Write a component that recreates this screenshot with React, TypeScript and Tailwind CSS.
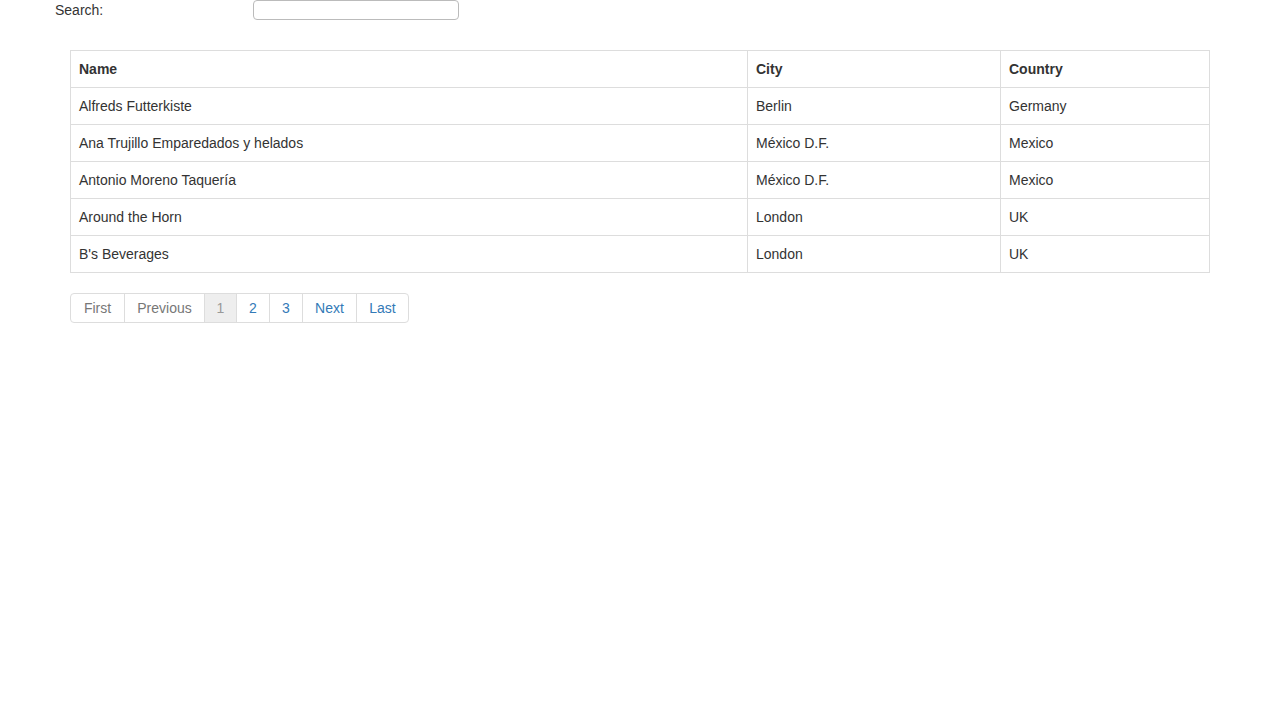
const rows = [
  ["Alfreds Futterkiste", "Berlin", "Germany"],
  ["Ana Trujillo Emparedados y helados", "México D.F.", "Mexico"],
  ["Antonio Moreno Taquería", "México D.F.", "Mexico"],
  ["Around the Horn", "London", "UK"],
  ["B's Beverages", "London", "UK"],
];
export default function App() {
  const pages = [
    { t: "First", c: "text-[#777] w-[53px]" },
    { t: "Previous", c: "text-[#777] w-[80px]" },
    { t: "1", c: "text-[#999] bg-[#eee] w-[32px]" },
    { t: "2", c: "text-[#337ab7] w-[33px]" },
    { t: "3", c: "text-[#337ab7] w-[33px]" },
    { t: "Next", c: "text-[#337ab7] w-[54px]" },
    { t: "Last", c: "text-[#337ab7] w-[52px]" },
  ];
  return (
    <div className="min-h-[720px] bg-white text-[14px] text-[#333]" style={{ fontFamily: '"Liberation Sans", Arial, sans-serif' }}>
      <div className="flex items-center h-[20px]">
        <label className="pl-[55px] w-[253px]">Search:</label>
        <input className="w-[206px] h-[20px] border border-[#bbb] rounded-[4px]" />
      </div>
      <div className="mx-[70px] mt-[30px] w-[1140px]">
        <table className="w-full border-collapse border border-[#ddd]">
          <thead>
            <tr className="h-[37px]">
              <th className="text-left font-bold px-2 border border-[#ddd] w-[677px]">Name</th>
              <th className="text-left font-bold px-2 border border-[#ddd] w-[253px]">City</th>
              <th className="text-left font-bold px-2 border border-[#ddd]">Country</th>
            </tr>
          </thead>
          <tbody>
            {rows.map((r, i) => (
              <tr key={i} className="h-[37px]">
                {r.map((c, j) => (
                  <td key={j} className="px-2 border border-[#ddd]">{c}</td>
                ))}
              </tr>
            ))}
          </tbody>
        </table>
        <div className="mt-[20px] flex">
          <div className="flex border border-[#ddd] rounded-[4px] overflow-hidden h-[30px]">
            {pages.map((p, i) => (
              <div key={i} className={`flex items-center justify-center ${i ? "border-l border-[#ddd]" : ""} ${p.c}`}>{p.t}</div>
            ))}
          </div>
        </div>
      </div>
    </div>
  );
}
